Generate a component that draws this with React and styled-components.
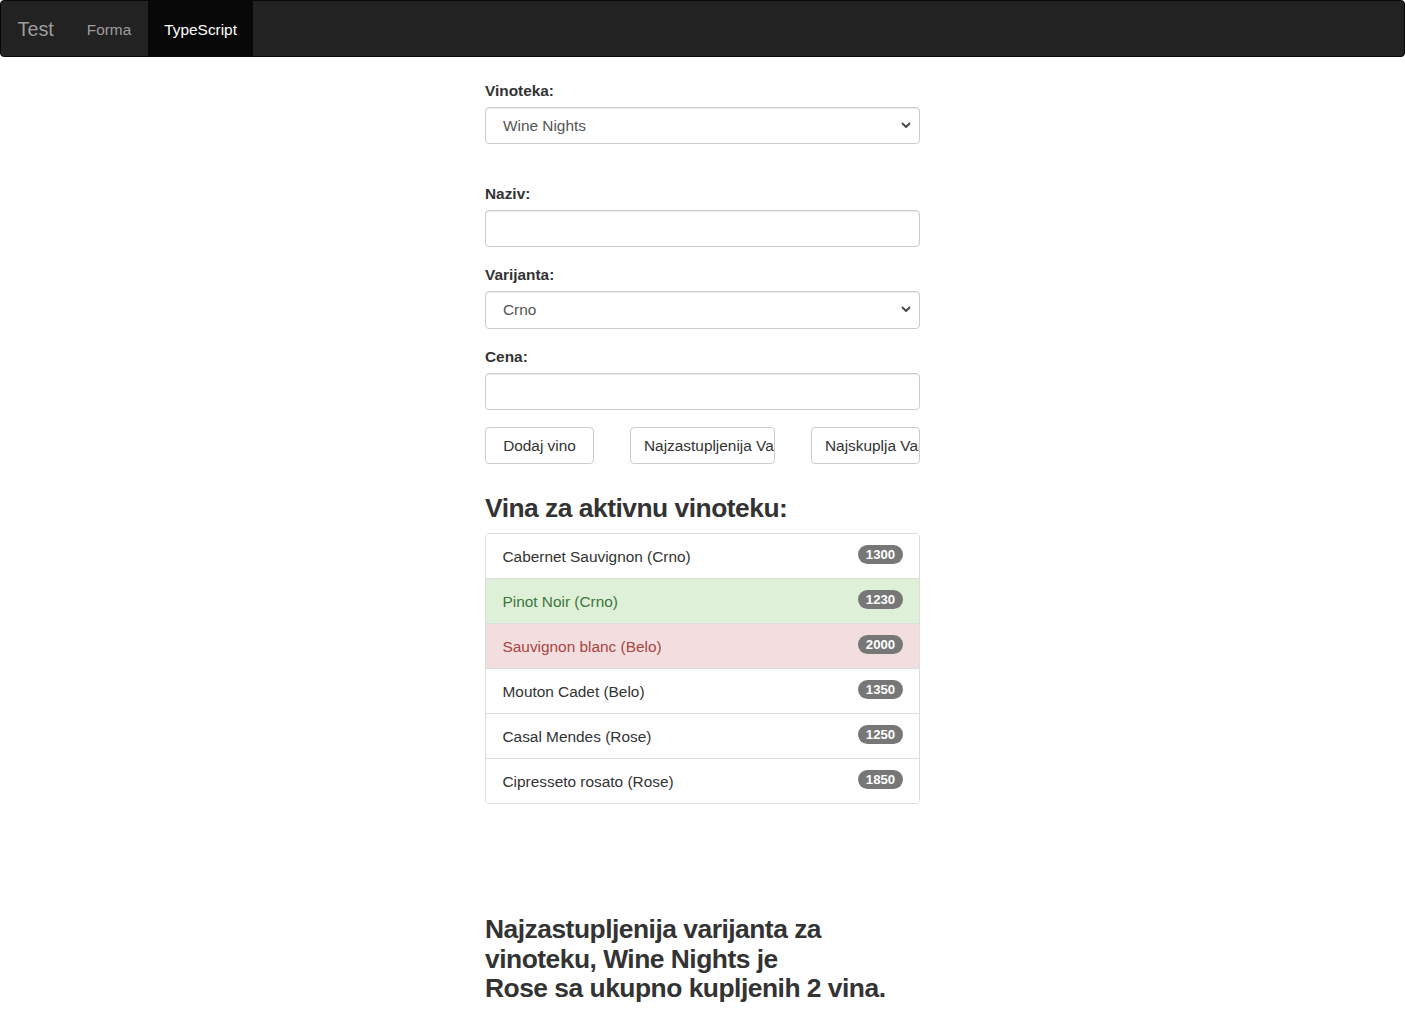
import React from 'react'
import styled, {createGlobalStyle} from 'styled-components'

const GlobalStyle = createGlobalStyle`
    body{
        margin: 0;
        font-family: "Liberation Sans", Arial, sans-serif;
        font-size: 15.4px;
        line-height: 1.42857;
        color: #333;
        background: #fff;
    }
    *{
        box-sizing: border-box;
    }
`

const Navbar = styled.nav`
    display: flex;
    align-items: stretch;
    height: 57px;
    background: #222;
    border: 1px solid #080808;
    border-radius: 4px;
    margin-bottom: 23px;
`
const Brand = styled.a`
    display: flex;
    align-items: center;
    padding: 2px 16.5px 0 16.5px;
    font-size: 19.8px;
    color: #9d9d9d;
    text-decoration: none;
`
const NavLink = styled.a`
    display: flex;
    align-items: center;
    padding: 2px 16.5px 0 16.5px;
    font-size: 15.4px;
    color: ${props => props.active ? '#fff' : '#9d9d9d'};
    background: ${props => props.active ? '#080808' : 'transparent'};
    text-decoration: none;
`
const Container = styled.div`
    width: 435px;
    margin: 0 auto;
`
const FormGroup = styled.div`
    margin-bottom: ${props => props.mb || 17.5}px;
`
const Label = styled.label`
    display: block;
    font-weight: bold;
    margin-bottom: 4.5px;
`
const Input = styled.input`
    display: block;
    width: 100%;
    height: 37px;
    padding: 6px 17px;
    font: inherit;
    color: #555;
    background: #fff;
    border: 1px solid #ccc;
    border-radius: 4px;
    box-shadow: inset 0 1px 1px rgba(0,0,0,.075);
    outline: none;
`
const SelectWrap = styled.div`
    position: relative;
    svg{
        position: absolute;
        right: 9px;
        top: 15px;
        pointer-events: none;
    }
`
const Select = styled.select`
    display: block;
    width: 100%;
    height: ${props => props.tall ? '38px' : '37px'};
    padding: 1px 17px 0 17px;
    font: inherit;
    color: #555;
    background: #fff;
    border: 1px solid #ccc;
    border-radius: 4px;
    box-shadow: inset 0 1px 1px rgba(0,0,0,.075);
    appearance: none;
    -webkit-appearance: none;
    outline: none;
`
const ButtonRow = styled.div`
    display: flex;
    justify-content: space-between;
    margin-bottom: 30px;
`
const Button = styled.button`
    width: ${props => props.w}px;
    height: 37px;
    padding: 1px 13px 0 13px;
    font: inherit;
    color: #333;
    background: #fff;
    border: 1px solid #ccc;
    border-radius: 4px;
    white-space: nowrap;
    overflow: hidden;
    text-align: ${props => props.clip ? 'left' : 'center'};
`
const Heading = styled.h3`
    font-size: 26.4px;
    font-weight: bold;
    line-height: 1.1;
    letter-spacing: -0.5px;
    margin: 0 0 10px 0;
    color: #333;
`
const ListGroup = styled.ul`
    list-style: none;
    margin: 0 0 111px 0;
    padding: 0;
    border: 1px solid #ddd;
    border-radius: 4px;
    overflow: hidden;
`
const ListItem = styled.li`
    display: flex;
    justify-content: space-between;
    align-items: center;
    height: ${props => props.last ? '44px' : '45px'};
    padding: 1px 16px 0 16.5px;
    border-bottom: ${props => props.last ? 'none' : '1px solid #ddd'};
    background: ${props => props.variant === 'success' ? '#dff0d8' : props.variant === 'danger' ? '#f2dede' : '#fff'};
    color: ${props => props.variant === 'success' ? '#3c763d' : props.variant === 'danger' ? '#a94442' : '#333'};
`
const Badge = styled.span`
    display: inline-block;
    min-width: 45px;
    padding: 2px 7.7px;
    font-size: 13.2px;
    font-weight: bold;
    line-height: 15px;
    color: #fff;
    text-align: center;
    background: #777;
    border-radius: 11px;
    margin-top: -4px;
`
const Result = styled.h3`
    font-size: 26.4px;
    font-weight: bold;
    line-height: 29.5px;
    letter-spacing: -0.5px;
    margin: 0;
    color: #333;
`

const Chevron = () => (
    <svg width="10" height="7" viewBox="0 0 10 7">
        <path d="M1.5 1.5 L5 5 L8.5 1.5" fill="none" stroke="#444" strokeWidth="1.8" strokeLinecap="round" strokeLinejoin="round" />
    </svg>
)

const wines = [
    {name: 'Cabernet Sauvignon (Crno)', price: 1300},
    {name: 'Pinot Noir (Crno)', price: 1230, variant: 'success'},
    {name: 'Sauvignon blanc (Belo)', price: 2000, variant: 'danger'},
    {name: 'Mouton Cadet (Belo)', price: 1350},
    {name: 'Casal Mendes (Rose)', price: 1250},
    {name: 'Cipresseto rosato (Rose)', price: 1850},
]

const App = () => {
    return (
        <>
        <GlobalStyle />
        <Navbar>
            <Brand href="#">Test</Brand>
            <NavLink href="#">Forma</NavLink>
            <NavLink href="#" active>TypeScript</NavLink>
        </Navbar>
        <Container>
            <FormGroup mb={39.5}>
                <Label>Vinoteka:</Label>
                <SelectWrap>
                    <Select defaultValue="wn">
                        <option value="wn">Wine Nights</option>
                    </Select>
                    <Chevron />
                </SelectWrap>
            </FormGroup>
            <FormGroup>
                <Label>Naziv:</Label>
                <Input type="text" />
            </FormGroup>
            <FormGroup>
                <Label>Varijanta:</Label>
                <SelectWrap>
                    <Select tall defaultValue="crno">
                        <option value="crno">Crno</option>
                    </Select>
                    <Chevron />
                </SelectWrap>
            </FormGroup>
            <FormGroup>
                <Label>Cena:</Label>
                <Input type="text" />
            </FormGroup>
            <ButtonRow>
                <Button w={109}>Dodaj vino</Button>
                <Button w={145} clip>Najzastupljenija Varijanta</Button>
                <Button w={109} clip>Najskuplja Varijanta</Button>
            </ButtonRow>
            <Heading>Vina za aktivnu vinoteku:</Heading>
            <ListGroup>
                {wines.map((w, i) => (
                    <ListItem key={w.name} variant={w.variant} last={i === wines.length - 1}>
                        {w.name}
                        <Badge>{w.price}</Badge>
                    </ListItem>
                ))}
            </ListGroup>
            <Result>
                Najzastupljenija varijanta za vinoteku, Wine Nights je<br />
                Rose sa ukupno kupljenih 2 vina.
            </Result>
        </Container>
        </>
    )
}

export default App
